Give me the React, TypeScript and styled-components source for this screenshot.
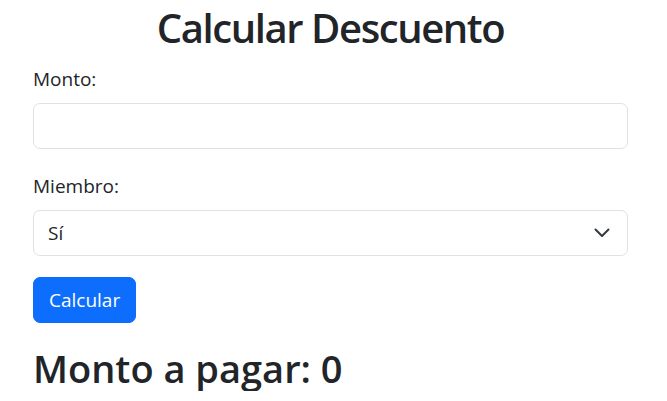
import { useState } from "react";
import styled, { createGlobalStyle } from "styled-components";

const GlobalStyle = createGlobalStyle`
  * {
    box-sizing: border-box;
  }

  body {
    margin: 0;
    background: #fff;
    color: #212529;
    font-family: "Open Sans", "Noto Sans", sans-serif;
  }
`;

const Container = styled.div`
  display: flex;
  flex-direction: column;
  width: 595px;
  margin-left: 33px;
`;

const Title = styled.h1`
  margin: 0;
  padding-top: 2px;
  height: 65px;
  font-size: 40px;
  font-weight: 600;
  line-height: 52px;
  letter-spacing: -1.4px;
  text-align: center;
`;

const Field = styled.div<{ $gap: number }>`
  display: flex;
  flex-direction: column;
  margin-bottom: ${({ $gap }) => $gap}px;
`;

const Label = styled.label`
  margin-bottom: 9px;
  font-size: 19px;
  line-height: 29px;
`;

const Input = styled.input`
  height: 46px;
  padding: 0 14px;
  border: 1px solid #dee2e6;
  border-radius: 7px;
  background: #fff;
  font: inherit;
  font-size: 19px;
  color: #212529;
  outline: none;
`;

const SelectWrap = styled.div`
  position: relative;
  display: flex;
  flex-direction: column;
`;

const Select = styled.select`
  height: 46px;
  padding: 0 50px 0 14px;
  border: 1px solid #dee2e6;
  border-radius: 7px;
  background: #fff;
  font: inherit;
  font-size: 19px;
  color: #212529;
  appearance: none;
  outline: none;
`;

const Chevron = styled.svg`
  position: absolute;
  top: 50%;
  right: 18px;
  width: 16px;
  height: 10px;
  transform: translateY(-50%);
  pointer-events: none;
`;

const Button = styled.button`
  align-self: flex-start;
  height: 46px;
  padding: 0 15px;
  border: 1px solid #0d6efd;
  border-radius: 7px;
  background: #0d6efd;
  color: #fff;
  font: inherit;
  font-size: 19px;
  cursor: pointer;
`;

const Result = styled.h2`
  margin: 22px 0 0;
  font-size: 38px;
  font-weight: 600;
  line-height: 46px;
`;

export default function App() {
  const [monto, setMonto] = useState("");
  const [miembro, setMiembro] = useState("si");
  const [total, setTotal] = useState(0);

  const calcular = () => {
    const valor = parseFloat(monto) || 0;
    setTotal(miembro === "si" ? valor * 0.9 : valor);
  };

  return (
    <>
      <GlobalStyle />
      <Container>
        <Title>Calcular Descuento</Title>
        <Field $gap={23}>
          <Label htmlFor="monto">Monto:</Label>
          <Input
            id="monto"
            type="number"
            value={monto}
            onChange={(e) => setMonto(e.target.value)}
          />
        </Field>
        <Field $gap={21}>
          <Label htmlFor="miembro">Miembro:</Label>
          <SelectWrap>
            <Select
              id="miembro"
              value={miembro}
              onChange={(e) => setMiembro(e.target.value)}
            >
              <option value="si">Sí</option>
              <option value="no">No</option>
            </Select>
            <Chevron viewBox="0 0 16 10" fill="none">
              <path
                d="m1.5 1.5 6.5 6.5 6.5-6.5"
                stroke="#343a40"
                strokeWidth="2"
                strokeLinecap="round"
                strokeLinejoin="round"
              />
            </Chevron>
          </SelectWrap>
        </Field>
        <Button onClick={calcular}>Calcular</Button>
        <Result>Monto a pagar: {total}</Result>
      </Container>
    </>
  );
}
